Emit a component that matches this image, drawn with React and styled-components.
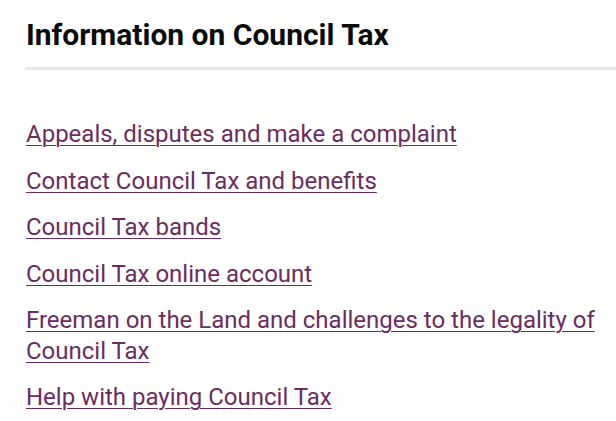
import React from "react";
import styled, { createGlobalStyle } from "styled-components";

const Global = createGlobalStyle`
  html, body { margin: 0; padding: 0; background: #fff; }
  body { font-family: Roboto, "Noto Sans", sans-serif; }
`;

const Section = styled.section`
  padding: 17px 0 0 26px;
`;

const Heading = styled.h2`
  margin: 0;
  padding-bottom: 14px;
  font-size: 30px;
  line-height: 36px;
  font-weight: 700;
  color: #0b0c0c;
  border-bottom: 3px solid #ebe7ea;
`;

const List = styled.ul`
  list-style: none;
  margin: 0;
  padding: 49px 8px 0 0;
  display: flex;
  flex-direction: column;
  gap: 16px;
`;

const Link = styled.a`
  font-size: 24px;
  line-height: 30.5px;
  color: #6b2c61;
  text-decoration: underline;
  text-decoration-thickness: 1px;
  text-underline-offset: 3px;
`;

const links = [
  "Appeals, disputes and make a complaint",
  "Contact Council Tax and benefits",
  "Council Tax bands",
  "Council Tax online account",
  "Freeman on the Land and challenges to the legality of Council Tax",
  "Help with paying Council Tax",
];

export default function App() {
  return (
    <>
      <Global />
      <Section>
        <Heading>Information on Council Tax</Heading>
        <List>
          {links.map((l) => (
            <li key={l}>
              <Link href="#">{l}</Link>
            </li>
          ))}
        </List>
      </Section>
    </>
  );
}
